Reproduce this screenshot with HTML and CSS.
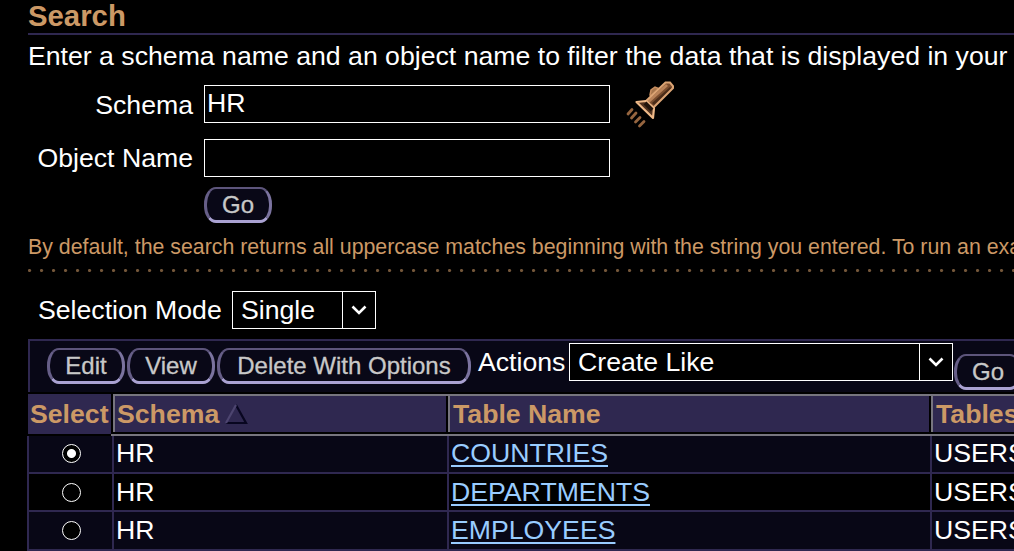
FILE: index.html
```html
<!DOCTYPE html>
<html lang="en">
<head>
<meta charset="utf-8">
<title>Tables</title>
<link rel="stylesheet" href="styles.css">
</head>
<body>
<main class="page">
  <h1 class="title">Search</h1>
  <p class="intro">Enter a schema name and an object name to filter the data that is displayed in your</p>
  <form class="search">
    <label class="search-label" for="schema">Schema</label>
    <input class="field" id="schema" value="HR">
    <svg class="torch" width="50" height="48" viewBox="0 0 50 48">
      <path d="M24 14L25 9L29 6L34 8L28 16Z" fill="#a8764c" stroke="#c98f60" stroke-width="1.500"/>
      <path d="M19 21L40 1.500H44L47 5V7L28 26Z" fill="#7a4d2e"/>
      <path d="M22 21L41 4" stroke="#b98258" stroke-width="3"/>
      <path d="M27 23L45 7" stroke="#4a2c19" stroke-width="3"/>
      <path d="M19 21L39.500 1.500H44L47 5V7L28 26" fill="none" stroke="#dba474" stroke-width="2"/>
      <path d="M10.500 21L20 20L28 27L27 37Z" fill="#50321f" stroke="#efb988" stroke-width="2.200" stroke-linejoin="round"/>
      <path d="M19 22L26 29" stroke="#22140b" stroke-width="4"/>
      <path d="M2 33L6 28.500M5.500 37L10 32M9.500 41L14 36.500M13.500 45L18 40.500" stroke="#96653f" stroke-width="2.800" stroke-linecap="round"/>
    </svg>
    <label class="search-label object-label" for="object">Object Name</label>
    <input class="field" id="object">
    <button class="button search-go" type="button">Go</button>
  </form>
  <p class="hint">By default, the search returns all uppercase matches beginning with the string you entered. To run an exact</p>
  <div class="dots"></div>
  <div class="mode">
    <span class="mode-label">Selection Mode</span>
    <div class="select mode-select"><span class="select-value">Single</span><span class="select-arrow"><svg width="16" height="12" viewBox="0 0 16 12"><path d="M1.500 2.500L8 9L14.500 2.500" fill="none" stroke="#fff" stroke-width="2.600"/></svg></span></div>
  </div>
  <div class="toolbar">
    <button class="button edit" type="button">Edit</button>
    <button class="button view" type="button">View</button>
    <button class="button delete" type="button">Delete With Options</button>
    <span class="actions-label">Actions</span>
    <div class="select action-select"><span class="select-value">Create Like</span><span class="select-arrow"><svg width="16" height="12" viewBox="0 0 16 12"><path d="M1.500 2.500L8 9L14.500 2.500" fill="none" stroke="#fff" stroke-width="2.600"/></svg></span></div>
    <button class="button action-go" type="button">Go</button>
  </div>
  <div class="head">
    <div class="head-select">Select</div>
    <div class="head-cell schema-cell">Schema
      <svg class="sort" width="24" height="22" viewBox="0 0 24 22"><path d="M12 2L22 20H2" fill="none" stroke="#080620" stroke-width="2.200"/><path d="M2 20L12 2" stroke="#4d4570" stroke-width="2.200"/></svg>
    </div>
    <div class="head-cell">Table Name</div>
    <div class="head-cell">Tablespace</div>
  </div>
  <div class="body">
    <div class="row first"><div class="cell pick"><span class="radio checked"></span></div><div class="cell">HR</div><div class="cell"><a class="link">COUNTRIES</a></div><div class="cell">USERS</div></div>
    <div class="row dark"><div class="cell pick"><span class="radio"></span></div><div class="cell">HR</div><div class="cell"><a class="link">DEPARTMENTS</a></div><div class="cell">USERS</div></div>
    <div class="row last"><div class="cell pick"><span class="radio"></span></div><div class="cell">HR</div><div class="cell"><a class="link">EMPLOYEES</a></div><div class="cell">USERS</div></div>
  </div>
</main>
</body>
</html>
```
FILE: styles.css
```css
* { box-sizing: border-box; }
body {
  margin: 0;
  background: #000;
  color: #fff;
  font: 26.667px "Liberation Sans", Arial, sans-serif;
  overflow: hidden;
}
.page { width: 1014px; height: 551px; overflow: hidden; padding-left: 28px; white-space: nowrap; }
.title {
  margin: 0;
  height: 35px;
  border-bottom: 2px solid #2f2850;
  color: #cc9966;
  font-size: 29.333px;
  line-height: 32px;
}
.intro { margin: 0; height: 50px; line-height: 42px; }
.search {
  display: grid;
  grid-template-columns: 166px 406px 50px;
  grid-template-rows: 54px 48px 36px;
  column-gap: 10px;
  height: 138px;
}
.search-label { padding-right: 1px; text-align: right; line-height: 40px; }
.object-label { line-height: 38px; }
.field {
  height: 38px;
  margin: 0;
  padding: 0 2px 2px;
  background: #000;
  border: 1px solid #fff;
  border-radius: 0;
  color: #fff;
  font: inherit;
  outline: 0;
}
.torch { margin: -4px 0 0 6px; }
.button {
  flex: none;
  height: 36px;
  margin: 0;
  padding: 1px 0 0;
  background: #090817;
  border: 3px solid #6a628c;
  border-width: 2px 3px 3px;
  border-color: #5d557b #7b739f #aaa2d2 #665e87;
  border-radius: 12px / 17px;
  color: #c8c8c8;
  font: 24px/30px "Liberation Sans", Arial, sans-serif;
  -webkit-text-stroke: .3px #c8c8c8;
}
.search-go { grid-column: 2; width: 68px; }
.hint { margin: 0; height: 46px; color: #cc9966; font-size: 21.333px; line-height: 49px; }
.dots {
  height: 3px;
  background: radial-gradient(circle at 1.5px 1.5px, #75573a 1px, #000 2.2px) 0 0 / 12px 3px repeat-x;
}
.mode { display: flex; padding: 19px 0 0 10px; height: 67px; }
.mode-label { width: 194px; line-height: 39px; }
.select { display: flex; flex: none; height: 38px; border: 1px solid #fff; background: #000; }
.select-value { flex: 1; padding-left: 8px; line-height: 37px; }
.select-arrow { display: flex; align-items: center; justify-content: center; width: 33px; border-left: 1px solid #fff; }
.mode-select { width: 144px; }
.toolbar {
  display: flex;
  align-items: flex-start;
  height: 53px;
  padding: 2px 0 0 17px;
  border: 2px solid #2f2850;
  border-width: 2px 0 0 2px;
  background: #080716;
}
.toolbar .button { margin-top: 5px; }
.edit { width: 78px; }
.toolbar .view { width: 88px; margin-left: 2px; }
.toolbar .delete { width: 254px; margin-left: 2px; }
.actions-label { flex: none; width: 98px; padding-left: 7px; line-height: 39px; }
.action-select { width: 384px; }
.toolbar .action-go { width: 68px; margin: 11px 0 0 1px; }
.head {
  display: grid;
  grid-template-columns: 83px 333px 481px 90px;
  column-gap: 2px;
  margin-top: 2px;
  height: 42px;
  color: #cc9966;
  font-weight: bold;
  background: linear-gradient(#77757f, #77757f) 85px 0 / 902px 2px no-repeat,
              linear-gradient(#77757f, #77757f) 83px 40px / 904px 2px no-repeat;
}
.head-select { height: 40px; padding-left: 2px; line-height: 40px; background: #2f2850; }
.head-cell {
  display: flex;
  height: 38px;
  padding-left: 3px;
  border: 2px solid #77757f;
  border-width: 2px 0 0 2px;
  line-height: 36px;
  background: #2f2850;
}
.schema-cell { padding-left: 2px; }
.sort { margin: 7px 0 0 5px; }
.body { margin-left: -1px; border-left: 2px solid #2f2850; }
.row { display: grid; grid-template-columns: 83px 335px 483px 90px; height: 38px; background: #080716; border-bottom: 2px solid #2f2850; }
.dark { background: #000; }
.last { height: 39px; }
.cell { padding-left: 2px; border-left: 2px solid #2f2850; line-height: 36px; }
.first .cell { line-height: 34px; }
.cell.pick { display: flex; align-items: center; justify-content: center; padding: 0 0 0 2px; border: 0; }
.first .pick { padding-bottom: 1px; }
.radio { width: 19px; height: 19px; border: 1px solid #fff; border-radius: 50%; background: #000; }
.checked { background: radial-gradient(circle, #fff 4px, #000 5px); }
.link { color: #99ccff; text-decoration: underline; text-decoration-thickness: 2px; text-underline-offset: 3px; }
```
